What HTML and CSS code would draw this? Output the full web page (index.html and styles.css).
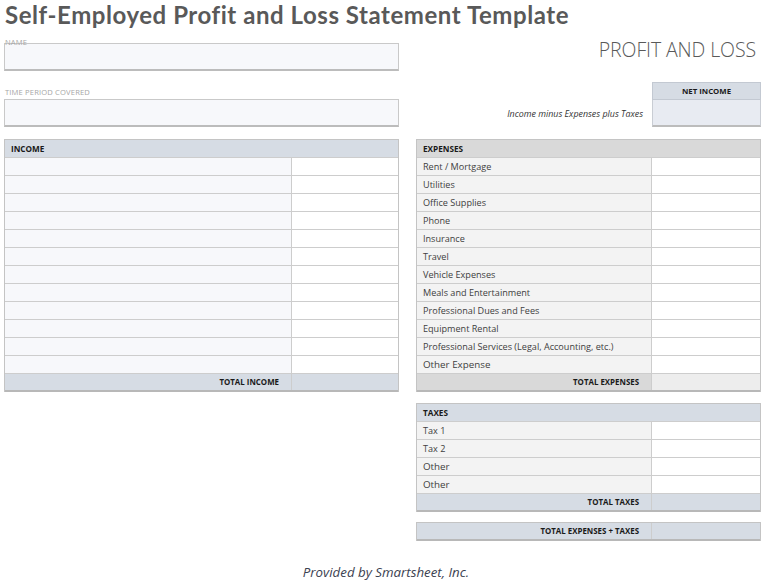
FILE: index.html
```html
<!DOCTYPE html>
<html lang="en">
<head>
<meta charset="utf-8">
<title>Self-Employed Profit and Loss Statement Template</title>
<link rel="stylesheet" href="styles.css">
</head>
<body>
<div class="page">
  <h1 class="title">Self-Employed Profit and Loss Statement Template</h1>
  <div class="grid">
    <div class="info">
      <div class="field field-name">
        <div class="label">NAME</div>
        <div class="box"></div>
      </div>
      <div class="field field-time">
        <div class="label">TIME PERIOD COVERED</div>
        <div class="box"></div>
      </div>
    </div>
    <div class="summary">
      <div class="pl">PROFIT AND LOSS</div>
      <div class="net">
        <div class="net-note">Income minus Expenses plus Taxes</div>
        <div class="net-box">
          <div class="net-head">NET INCOME</div>
          <div class="net-val"></div>
        </div>
      </div>
    </div>

    <div class="tbl tbl-income">
      <div class="row head">INCOME</div>
      <div class="row"><div class="c-l"></div><div class="c-v"></div></div>
      <div class="row"><div class="c-l"></div><div class="c-v"></div></div>
      <div class="row"><div class="c-l"></div><div class="c-v"></div></div>
      <div class="row"><div class="c-l"></div><div class="c-v"></div></div>
      <div class="row"><div class="c-l"></div><div class="c-v"></div></div>
      <div class="row"><div class="c-l"></div><div class="c-v"></div></div>
      <div class="row"><div class="c-l"></div><div class="c-v"></div></div>
      <div class="row"><div class="c-l"></div><div class="c-v"></div></div>
      <div class="row"><div class="c-l"></div><div class="c-v"></div></div>
      <div class="row"><div class="c-l"></div><div class="c-v"></div></div>
      <div class="row"><div class="c-l"></div><div class="c-v"></div></div>
      <div class="row"><div class="c-l"></div><div class="c-v"></div></div>
      <div class="row total"><div class="c-l">TOTAL INCOME</div><div class="c-v"></div></div>
    </div>

    <div class="right">
      <div class="tbl tbl-exp">
        <div class="row head">EXPENSES</div>
        <div class="row"><div class="c-l">Rent / Mortgage</div><div class="c-v"></div></div>
        <div class="row"><div class="c-l">Utilities</div><div class="c-v"></div></div>
        <div class="row"><div class="c-l">Office Supplies</div><div class="c-v"></div></div>
        <div class="row"><div class="c-l">Phone</div><div class="c-v"></div></div>
        <div class="row"><div class="c-l">Insurance</div><div class="c-v"></div></div>
        <div class="row"><div class="c-l">Travel</div><div class="c-v"></div></div>
        <div class="row"><div class="c-l">Vehicle Expenses</div><div class="c-v"></div></div>
        <div class="row"><div class="c-l">Meals and Entertainment</div><div class="c-v"></div></div>
        <div class="row"><div class="c-l">Professional Dues and Fees</div><div class="c-v"></div></div>
        <div class="row"><div class="c-l">Equipment Rental</div><div class="c-v"></div></div>
        <div class="row"><div class="c-l">Professional Services (Legal, Accounting, etc.)</div><div class="c-v"></div></div>
        <div class="row"><div class="c-l big">Other Expense</div><div class="c-v"></div></div>
        <div class="row total"><div class="c-l">TOTAL EXPENSES</div><div class="c-v"></div></div>
      </div>

      <div class="tbl tbl-tax">
        <div class="row head">TAXES</div>
        <div class="row"><div class="c-l">Tax 1</div><div class="c-v"></div></div>
        <div class="row"><div class="c-l">Tax 2</div><div class="c-v"></div></div>
        <div class="row"><div class="c-l big">Other</div><div class="c-v"></div></div>
        <div class="row"><div class="c-l big">Other</div><div class="c-v"></div></div>
        <div class="row total"><div class="c-l">TOTAL TAXES</div><div class="c-v"></div></div>
      </div>

      <div class="tbl tbl-grand">
        <div class="row total"><div class="c-l">TOTAL EXPENSES + TAXES</div><div class="c-v"></div></div>
      </div>
    </div>
  </div>
  <footer class="footer">Provided by Smartsheet, Inc.</footer>
</div>
</body>
</html>
```

FILE: styles.css
```css
* { box-sizing: border-box; }

html, body {
  margin: 0;
  padding: 0;
  background: #ffffff;
}

body {
  font-family: "Open Sans", "DejaVu Sans", sans-serif;
  color: #333333;
}

.page {
  width: 762px;
  height: 581px;
  overflow: hidden;
}

.title {
  margin: 0;
  padding-left: 5px;
  height: 38px;
  font-family: Lato, "Open Sans", sans-serif;
  font-weight: 700;
  font-size: 24px;
  line-height: 30px;
  color: #595959;
  letter-spacing: 0.55px;
  white-space: nowrap;
}

.grid {
  display: grid;
  grid-template-columns: 395px 345px;
  column-gap: 17px;
  margin-left: 4px;
  align-items: start;
}

/* ---------- info fields ---------- */
.label {
  font-size: 7.6px;
  color: #a6a6a6;
  padding-left: 1px;
  letter-spacing: 0.15px;
  white-space: nowrap;
}

.field-name .label {
  height: 8px;
  line-height: 8px;
  margin-bottom: -3px;
}

.field-time {
  margin-top: 16px;
}

.field-time .label {
  height: 10px;
  line-height: 10px;
  margin-bottom: 2px;
}

.box {
  height: 28px;
  background: #f7f8fb;
  border: 1px solid #c9c9c9;
  border-bottom: 2px solid #bcbcbc;
}

/* ---------- summary ---------- */
.summary {
  display: flex;
  flex-direction: column;
  align-items: stretch;
}

.pl {
  text-align: right;
  padding-right: 5px;
  font-size: 19.5px;
  line-height: 24px;
  font-weight: 300;
  color: #595959;
  letter-spacing: -0.1px;
}

.net {
  margin-top: 20px;
  display: flex;
  justify-content: flex-end;
  align-items: flex-end;
  gap: 9px;
}

.net-note {
  font-size: 8.9px;
  font-style: italic;
  color: #333333;
  height: 27px;
  line-height: 27px;
  white-space: nowrap;
}

.net-box {
  width: 109px;
}

.net-head {
  height: 18px;
  line-height: 17px;
  background: #d6dce4;
  border: 1px solid #c3c9d2;
  text-align: center;
  font-size: 7.8px;
  font-weight: 700;
  color: #1a1a1a;
}

.net-val {
  height: 27px;
  background: #e8ebf2;
  border: 1px solid #c9cdd4;
  border-top: 0;
  border-bottom: 2px solid #bcbcbc;
}

/* ---------- tables ---------- */
.tbl {
  margin-top: 12px;
  border: 1px solid #c4c4c4;
  border-bottom: 0;
}

.row {
  display: grid;
  height: 18px;
  border-bottom: 1px solid #cdcdcd;
}

.tbl-income .row { grid-template-columns: 287px 1fr; }
.right .row { grid-template-columns: 235px 1fr; }

.c-l {
  border-right: 1px solid #cdcdcd;
  padding-left: 6px;
  font-size: 9.1px;
  line-height: 17px;
  color: #404040;
  white-space: nowrap;
}

.c-l.big {
  font-size: 9.8px;
}

.c-v {
  background: #ffffff;
}

.head {
  display: block;
  padding-left: 6px;
  font-size: 8.2px;
  font-weight: 700;
  line-height: 17px;
  color: #1a1a1a;
  background: #d6dce4;
}

.tbl-income .c-l { background: #f7f8fb; }
.right .c-l { background: #f3f3f3; }

.total {
  border-bottom: 2px solid #b8b8b8;
}

.total .c-l {
  text-align: right;
  padding-right: 12px;
  font-size: 7.9px;
  font-weight: 700;
  color: #1a1a1a;
  line-height: 16px;
}

.tbl-income .total .c-l,
.tbl-income .total .c-v { background: #d6dce4; }

.tbl-exp .head { background: #d9d9d9; }
.tbl-exp .total .c-l { background: #d9d9d9; }
.tbl-exp .total .c-v { background: #ededed; }

.tbl-tax { margin-top: 11px; }
.tbl-tax .total .c-l,
.tbl-tax .total .c-v { background: #d6dce4; }

.tbl-grand { margin-top: 10px; }
.tbl-grand .total .c-l,
.tbl-grand .total .c-v { background: #d6dce4; }

/* ---------- footer ---------- */
.footer {
  margin-top: 23px;
  text-align: center;
  font-size: 13.3px;
  font-style: italic;
  color: #3b4150;
  padding-left: 10px;
  line-height: 16px;
}
```
